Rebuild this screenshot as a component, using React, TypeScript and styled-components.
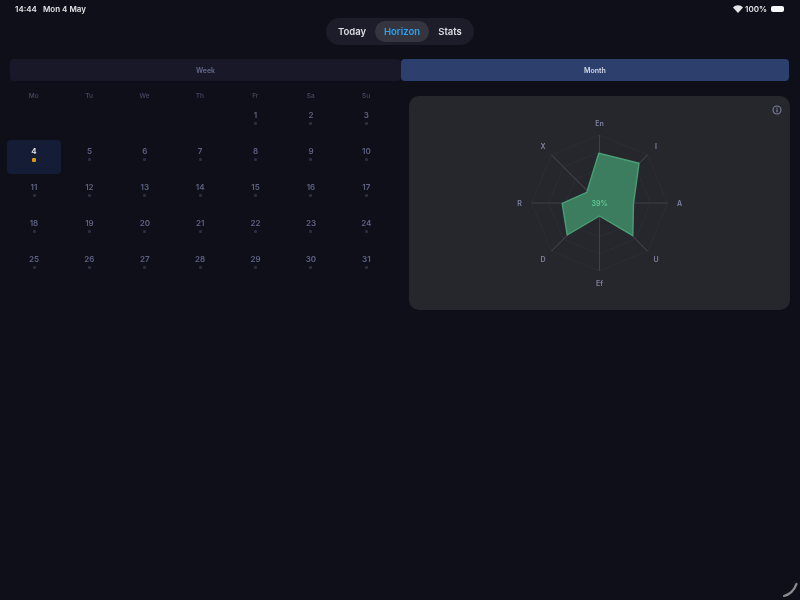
import React from "react";
import styled, { createGlobalStyle } from "styled-components";

const Global = createGlobalStyle`
  html, body { margin: 0; padding: 0; background: #0e0f19; }
  body { font-family: Inter, "Liberation Sans", sans-serif; }
`;

const Page = styled.div`
  position: relative;
  width: 800px;
  height: 600px;
  overflow: hidden;
  background: #0e0f19;
  filter: blur(0.75px);
`;

const StatusBar = styled.div`
  display: flex;
  justify-content: space-between;
  align-items: center;
  height: 18px;
  padding: 0 16px 0 15px;
  color: #e2e3e8;
  font-size: 8px;
  font-weight: 600;
`;

const StatusGroup = styled.div`
  display: flex;
  align-items: center;
  gap: 6px;
`;

const StatusRight = styled(StatusGroup)`
  gap: 2px;
`;

const Battery = styled.div`
  width: 13px;
  height: 6px;
  border-radius: 2px;
  background: #f6f6f8;
  margin-left: 2px;
`;

const NavRow = styled.div`
  display: flex;
  justify-content: center;
`;

const NavPill = styled.div`
  display: flex;
  align-items: center;
  width: 148px;
  height: 27px;
  box-sizing: border-box;
  padding: 0 3px;
  border-radius: 14px;
  background: #1c1d29;
`;

const NavItem = styled.div<{ $active?: boolean; $w: number }>`
  display: flex;
  align-items: center;
  justify-content: center;
  height: 21px;
  width: ${(p) => p.$w}px;
  border-radius: 11px;
  font-size: 9.5px;
  font-weight: 600;
  color: ${(p) => (p.$active ? "#2aa3f0" : "#dcdde3")};
  background: ${(p) => (p.$active ? "#34353f" : "transparent")};
`;

const Segments = styled.div`
  display: grid;
  grid-template-columns: 391px 388px;
  margin: 14px 11px 0 10px;
  height: 22px;
`;

const Segment = styled.div<{ $active?: boolean }>`
  display: flex;
  align-items: center;
  justify-content: center;
  border-radius: 4px;
  font-size: 7px;
  font-weight: 600;
  color: ${(p) => (p.$active ? "#d2d8e8" : "#666a8c")};
  background: ${(p) => (p.$active ? "#2c3f6d" : "#181828")};
`;

const Content = styled.div`
  display: flex;
  align-items: flex-start;
  margin-top: 11px;
  padding-left: 6px;
`;

const Calendar = styled.div`
  display: grid;
  grid-template-columns: repeat(7, 55.4px);
  grid-template-rows: 10px;
  grid-auto-rows: 34px;
  row-gap: 2px;
  width: 388px;
`;

const HeaderCell = styled.div`
  text-align: center;
  font-size: 6.5px;
  font-weight: 500;
  line-height: 8px;
  color: #474a64;
`;

const Day = styled.div<{ $today?: boolean }>`
  display: flex;
  flex-direction: column;
  align-items: center;
  box-sizing: border-box;
  width: 54px;
  margin-left: 1px;
  padding-top: 7px;
  border-radius: 4px;
  background: ${(p) => (p.$today ? "#141d35" : "transparent")};
`;

const DayNumber = styled.div<{ $today?: boolean }>`
  font-size: 8px;
  line-height: 9px;
  font-weight: 600;
  color: ${(p) => (p.$today ? "#eceded" : "#5f6382")};
`;

const DayDot = styled.div<{ $today?: boolean }>`
  width: ${(p) => (p.$today ? "4px" : "3px")};
  height: ${(p) => (p.$today ? "4px" : "3px")};
  margin-top: ${(p) => (p.$today ? "1.5px" : "2px")};
  border-radius: 1px;
  background: ${(p) => (p.$today ? "#dc961c" : "#2a2c40")};
`;

const RadarCard = styled.div`
  position: relative;
  display: flex;
  align-items: center;
  justify-content: center;
  width: 381px;
  height: 214px;
  margin-left: 15px;
  margin-top: 4px;
  border-radius: 10px;
  background: #26272c;
`;

const InfoIcon = styled.svg`
  position: absolute;
  top: 9px;
  right: 8px;
  width: 10px;
  height: 10px;
`;

const RadarSvg = styled.svg`
  width: 191px;
  height: 214px;
`;

const RadarLabel = styled.text`
  font-family: Inter, "Liberation Sans", sans-serif;
  font-size: 7px;
  font-weight: 600;
  fill: #7f83a0;
  text-anchor: middle;
  dominant-baseline: central;
`;

const RadarValue = styled(RadarLabel)`
  fill: #5ccc92;
`;

const HomeArc = styled.svg`
  position: absolute;
  right: 0;
  bottom: 0;
  width: 20px;
  height: 20px;
`;

const WEEK = ["Mo", "Tu", "We", "Th", "Fr", "Sa", "Su"];
const AXES = [
  { l: "En", a: 0 },
  { l: "I", a: 45 },
  { l: "A", a: 90 },
  { l: "U", a: 135 },
  { l: "Ef", a: 180 },
  { l: "D", a: 225 },
  { l: "R", a: 270 },
  { l: "X", a: 315 },
];
const CX = 95.5;
const CY = 107;
const pt = (a: number, r: number) => {
  const t = (a * Math.PI) / 180;
  return [CX + r * Math.sin(t), CY - r * Math.cos(t)];
};
const ring = (r: number) => AXES.map((x) => pt(x.a, r).join(",")).join(" ");
const SHAPE = [
  [599.3, 153.3],
  [639.5, 163.3],
  [634, 203.3],
  [633.3, 235.7],
  [600, 216],
  [567.7, 235],
  [562.7, 203.3],
  [587.3, 192.3],
]
  .map(([x, y]) => `${x - 504.5},${y - 96}`)
  .join(" ");

export default function App() {
  const cells: React.ReactNode[] = [];
  for (let i = 0; i < 4; i++) cells.push(<div key={`e${i}`} />);
  for (let d = 1; d <= 31; d++) {
    const today = d === 4;
    cells.push(
      <Day key={d} $today={today}>
        <DayNumber $today={today}>{d}</DayNumber>
        <DayDot $today={today} />
      </Day>
    );
  }
  return (
    <Page>
      <Global />
      <StatusBar>
        <StatusGroup>
          <span>14:44</span>
          <span>Mon 4 May</span>
        </StatusGroup>
        <StatusRight>
          <svg width="10" height="8" viewBox="0 0 10 8">
            <path d="M0 2.6 C2.8 -0.4 7.2 -0.4 10 2.6 L5 8 Z" fill="#e4e5e8" />
          </svg>
          <span>100%</span>
          <Battery />
        </StatusRight>
      </StatusBar>
      <NavRow>
        <NavPill>
          <NavItem $w={46}>Today</NavItem>
          <NavItem $w={54} $active>Horizon</NavItem>
          <NavItem $w={42}>Stats</NavItem>
        </NavPill>
      </NavRow>
      <Segments>
        <Segment>Week</Segment>
        <Segment $active>Month</Segment>
      </Segments>
      <Content>
        <Calendar>
          {WEEK.map((w) => (
            <HeaderCell key={w}>{w}</HeaderCell>
          ))}
          {cells}
        </Calendar>
        <RadarCard>
          <RadarSvg viewBox="0 0 191 214">
            {[17, 34, 51, 68].map((r) => (
              <polygon key={r} points={ring(r)} fill="none" stroke="#2d2e33" strokeWidth="0.8" />
            ))}
            {AXES.map((x) => {
              const [ex, ey] = pt(x.a, 68);
              return <line key={x.l} x1={CX} y1={CY} x2={ex} y2={ey} stroke="#3f4045" strokeWidth="1.1" />;
            })}
            <polygon points={SHAPE} fill="#3c7d5f" stroke="#4a9e76" strokeWidth="1.4" strokeLinejoin="round" />
            {AXES.map((x) => {
              const [lx, ly] = pt(x.a, 80);
              return (
                <RadarLabel key={x.l} x={lx} y={ly}>
                  {x.l}
                </RadarLabel>
              );
            })}
            <RadarValue x={CX} y={CY}>39%</RadarValue>
          </RadarSvg>
          <InfoIcon viewBox="0 0 10 10">
            <circle cx="5" cy="5" r="4" fill="none" stroke="#7c80a0" strokeWidth="1.1" />
            <rect x="4.4" y="4.3" width="1.2" height="3" fill="#7c80a0" />
            <rect x="4.4" y="2.5" width="1.2" height="1.1" fill="#7c80a0" />
          </InfoIcon>
        </RadarCard>
      </Content>
      <HomeArc viewBox="0 0 20 20">
        <path d="M4 16 C10 14.5 14 10.5 16.5 4" fill="none" stroke="#8a8b8e" strokeWidth="2.2" strokeLinecap="round" />
      </HomeArc>
    </Page>
  );
}
